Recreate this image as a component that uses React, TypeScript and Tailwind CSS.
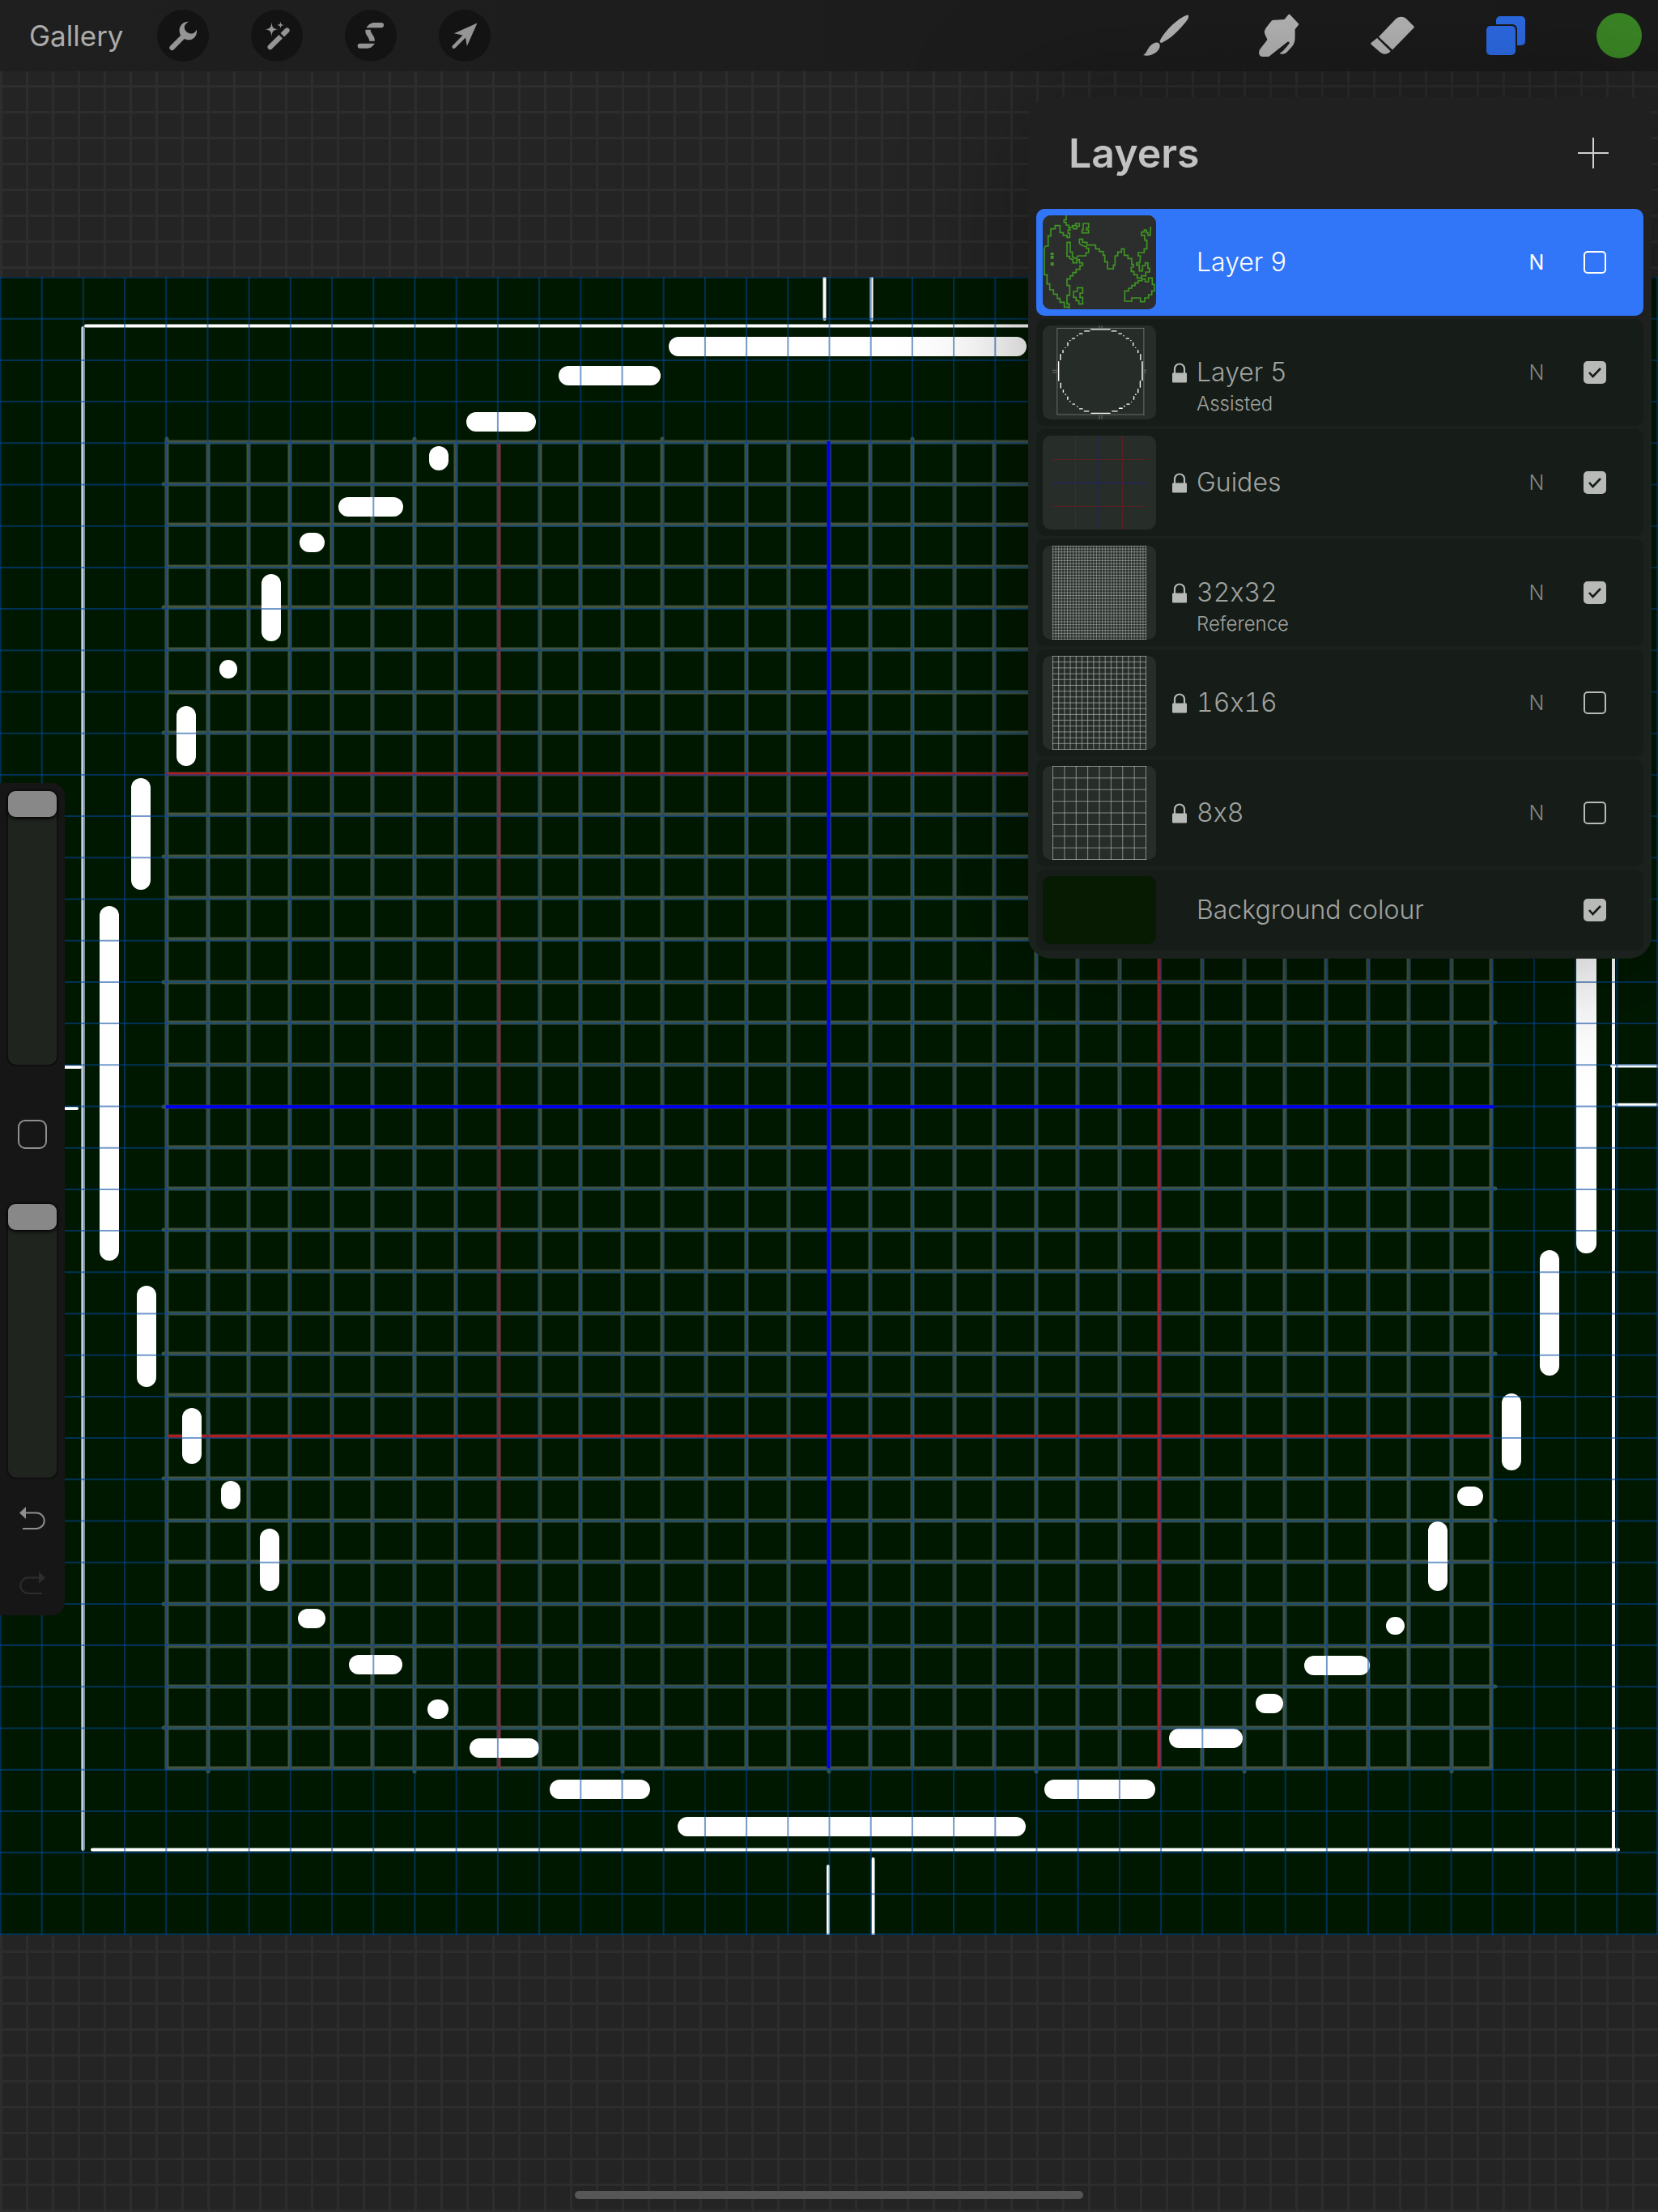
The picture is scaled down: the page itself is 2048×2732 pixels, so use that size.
import React from "react";

type Box = [number, number, number, number];

const GRID_X = [
  206, 257, 307, 358, 410, 460, 512, 563, 616, 667, 717, 769, 818, 872, 922, 974, 1024, 1075, 1127, 1179, 1228, 1280,
  1331, 1383, 1432, 1485, 1537, 1587, 1638, 1690, 1740, 1793, 1842,
];
const GRID_Y = [
  204, 256, 306, 358, 408, 460, 513, 563, 614, 664, 716, 767, 818, 871, 921, 973, 1025, 1075, 1126, 1177, 1228, 1280,
  1330, 1381, 1432, 1484, 1536, 1587, 1639, 1691, 1741, 1792, 1842,
];

// Brush strokes of the circle: left, top, right, bottom in canvas units.
const ARC_TOP_LEFT: Box[] = [
  [690, 110, 816, 134],
  [576, 167, 662, 191],
  [530, 209, 554, 239],
  [418, 272, 498, 296],
  [370, 316, 401, 340],
  [323, 367, 347, 450],
  [271, 473, 293, 496],
  [218, 530, 242, 604],
  [162, 619, 186, 757],
];
const ARC_REST: Box[] = [
  [826, 74, 1268, 98],
  [123, 777, 147, 1215],
  [169, 1246, 193, 1371],
  [225, 1397, 249, 1466],
  [273, 1487, 297, 1522],
  [321, 1546, 345, 1623],
  [368, 1645, 402, 1669],
  [431, 1702, 497, 1726],
  [528, 1757, 554, 1781],
  [580, 1805, 666, 1829],
  [679, 1856, 803, 1880],
  [837, 1902, 1267, 1926],
  [1290, 1856, 1427, 1880],
  [1444, 1793, 1535, 1817],
  [1551, 1750, 1585, 1774],
  [1611, 1703, 1692, 1727],
  [1712, 1655, 1735, 1677],
  [1764, 1537, 1788, 1623],
  [1800, 1494, 1832, 1518],
  [1855, 1379, 1879, 1474],
  [1902, 1202, 1926, 1357],
  [1947, 776, 1972, 1206],
];
const STROKES: Box[] = [
  ...ARC_TOP_LEFT,
  ...ARC_TOP_LEFT.map(([l, t, r, b]): Box => [2096 - r, t, 2096 - l, b]),
  ...ARC_REST,
];

function CircleStrokes() {
  return (
    <g fill="#fff">
      {STROKES.map(([l, t, r, b], i) => (
        <rect key={i} x={l} y={t} width={r - l} height={b - t} rx={Math.min(12, (r - l) / 2, (b - t) / 2)} />
      ))}
    </g>
  );
}

function Frame({ width }: { width: number }) {
  return (
    <g stroke="#fff" strokeWidth={width} strokeLinecap="round" fill="none">
      <path d="M106 60.500H1993M102.500 63V1942M114 1942.500H1999M1993 62V1942" />
      <path d="M1018.500 0V52M1076.500 0V53M1023 1963V2047M1078.500 1954V2047" />
      <path d="M0 976H99M0 1027H95M1991 974.500H2048M1997 1022.500H2048" />
    </g>
  );
}

function Canvas() {
  const cells = Array.from({ length: 41 }, (_, i) => i);
  return (
    <svg viewBox="0 0 2048 2048" className="block w-full bg-[#001800]" role="img" aria-label="Canvas">
      <g stroke="#43533f" strokeWidth="5" strokeLinecap="round">
        {GRID_X.map((x, i) => (
          <line key={x} x1={x} x2={x} y1={i % 6 === 0 ? 200 : 204} y2={i % 5 === 1 ? 1846 : 1842} />
        ))}
        {GRID_Y.map((y, i) => (
          <line key={y} y1={y} y2={y} x1={i % 3 === 1 ? 202 : 206} x2={i % 4 === 2 ? 1847 : 1842} />
        ))}
      </g>
      <path d="M616 204V1842M1432 204V1842M204 614H1842M208 1432H1842" stroke="#b01c1c" strokeWidth="4" fill="none" />
      <Frame width={4} />
      <CircleStrokes />
      <g stroke="#00489c" strokeOpacity="0.55">
        {cells.map((i) => {
          const at = Math.min(2047, i * 51.2 + 0.5);
          return (
            <React.Fragment key={i}>
              <line x1={at} x2={at} y1="0" y2="2048" strokeWidth="2" />
              <line y1={at} y2={at} x1="0" x2="2048" strokeWidth="2" />
            </React.Fragment>
          );
        })}
      </g>
      <path d="M1023.500 203V1842M205 1025H1846" stroke="#0000f0" strokeWidth="4" fill="none" />
    </svg>
  );
}

function WrenchIcon() {
  return (
    <svg viewBox="0 0 64 64" className="size-16" fill="#959595">
      <path d="M39.300 14.700C33 14.100 27.600 19 27.600 25.300c0 2.500.6 4.500 1.600 6.500L16.200 44.700c-2.800 3 1.400 7.400 4.500 4.600l13.100-13.200c2 .8 4 1.300 6.200 1.200 5.600-.4 10-5.800 9-12.800-2 3.800-4.300 5.400-7.200 5-4.300-.5-7.500-3.500-8-7.300-.3-3 1.800-5.600 5.500-7.500z" />
    </svg>
  );
}

function WandIcon() {
  return (
    <svg viewBox="0 0 64 64" className="size-16" fill="#959595">
      <path d="M25.500 15.500c.7 6.500 1.800 8 8.300 8.800-6.500.8-7.600 2.200-8.300 8.800-.7-6.600-1.800-8-8.300-8.800 6.500-.8 7.600-2.300 8.300-8.800z" />
      <path d="M36.500 14.500c.4 3.200.9 4 4.200 4.400-3.300.4-3.800 1.100-4.200 4.400-.4-3.300-.9-4-4.200-4.400 3.300-.4 3.800-1.200 4.200-4.400z" />
      <path d="M34.500 31l4.600 4.300-13.300 13.200c-3 2.700-7.200-1.600-4.500-4.500zM36.500 29l6-5.900c3-2.800 7.200 1.600 4.400 4.600l-5.800 5.700z" />
    </svg>
  );
}

function SelectIcon() {
  return (
    <svg viewBox="0 0 64 64" className="size-16" fill="#959595">
      <path d="M26.500 22.200C29 18.500 32 16 37 16h8a3 3 0 0 1 0 6.200zM25.500 24.800h6.200c-.2 5.300 5.500 6.500 5.200 14h-6.700c.3-5.500-6-7-4.700-14zM36.800 41.800c-2.500 3.900-5.300 6-10.300 6h-7.800a3 3 0 0 1 0-6z" />
    </svg>
  );
}

function ArrowIcon() {
  return (
    <svg viewBox="0 0 64 64" className="size-16" fill="#959595">
      <path d="M47.500 16.500L34.800 45l-1.700-10.500L20.300 47.300c-2.600 2-5-.5-3.200-3L29.500 31.500l-10.700-2.200z" />
    </svg>
  );
}

function BrushIcon() {
  return (
    <svg viewBox="0 0 56 56" className="size-14" fill="#b2b2b2">
      <path d="M56.300 3c1 1-.8 4.300-3.300 7.800C45 21 33.500 32.500 22.300 37.200l-2-2C25 24.500 38.500 11 49 5c3.500-2 6.500-3 7.300-2z" />
      <path d="M19.800 37.500c2.200 3.500.3 8.200-4.300 11.500C11 52.500 4.500 53.500 0 52c4-2 4.500-5.500 7-9 3.500-5 9.500-8 12.800-5.500z" />
    </svg>
  );
}

function SmudgeIcon() {
  return (
    <svg viewBox="0 0 56 56" className="size-14" fill="#b2b2b2">
      <path d="M39.500 2c.7-.5 1.300-.5 1.900 0l10.400 11c.6.7.6 1.300 0 2l-4.200 5.200v10c0 4.500-1 8-3.500 11-3 3.500-6 7-8.500 8.800-2 1-5.600 1.100-7-.2 3.500-1 9.900-9.500 12-12 .8-1.500-.9-3.200-2.300-2L16.500 53c-.8.8-1.600 1-2.600 1H7.500c-4-.5-5-3.500-4-7.500.3-1.700 9.800-12.500 9.800-13.500 0-1.500-3.300-6.500-3.400-9-.2-3 1.700-5 3-7 2-2.500 3.500-5 5-6.300C19.100 8.800 20.500 8.800 22.500 8.800l12-.8z" />
    </svg>
  );
}

function EraserIcon() {
  return (
    <svg viewBox="0 0 56 56" className="size-14" fill="#b2b2b2">
      <path d="M11 29.500L31.500 8C36 3.800 41.500 3.800 46 8L54.500 16.500c.6.6.6 1.200 0 1.800L28 45.500z" />
      <path d="M9 31L25.700 47.300c-4.200 4.700-9.200 4.500-13.500.7L1.500 38.700c-.5-.6-.5-1.200 0-1.700z" />
    </svg>
  );
}

function LayersIcon() {
  return (
    <svg viewBox="0 0 56 56" className="size-14" fill="#2c69e2">
      <path d="M16 14V9a5 5 0 0 1 5-5h26a5 5 0 0 1 5 5v26a5 5 0 0 1-5 5h-5V20a6 6 0 0 0-6-6z" />
      <rect x="4" y="16" width="36" height="36" rx="5" />
    </svg>
  );
}

function LockIcon() {
  return (
    <svg viewBox="0 0 18 25" className="h-[25px] w-[18px]" aria-label="Locked" role="img">
      <path d="M3 13V7.500a6 6 0 0 1 12 0V13" fill="none" stroke="#b8bab8" strokeWidth="2.200" />
      <rect y="12.500" width="18" height="12" rx="1" fill="#b8bab8" />
    </svg>
  );
}

const COAST =
  "M111 30V46H103V56H111V66H120V74H134V68H146V60H160V70H150V80H138V74M120 74L126 84H118V96H124V112H114V104H100V94H88V68H70V80H54V106H44V144H34L30 152V250H40V284H50V306H64V322H78V338H88V352H104V370H122V376V358H114V326H124V290H114V266H126V254H136V242H148V230H162V216H172V206H160V194H150V206H136V194L124 190V182H114V130H126V166H134V184L148 190L154 180H184V168H194V152H186V146L170 142L160 134V118H172V130H188V140H220V154H234V164H248V178H254V202H264V228H286V214H292V180H302V166H316V154H326V178H340V190H354V212H360V222H352V238H362V250H374V262H390V254H406V240H420V226H414V206H404V216H394V236H382V214H372V206H384L386 180H378V168H400V154H410V122H402V104H390V92H400V84H408V94H414V104H422L424 72M174 60H194V76H186V84H194V95H170V84H174ZM152 298H172V318H162V334H172V358H158V346H148V334H138V312H152ZM328 310H342V300H354V290H366V280H378V272H392V266H404V276H416V262H430V286H438V310H428V324H416V336H402V350H386V336H354V348H328Z";

function GridLines({ cells, opacity }: { cells: number; opacity: number }) {
  const step = 115 / cells;
  const marks = Array.from({ length: cells + 1 }, (_, i) => i * step + 0.5);
  const d = marks.map((m) => `M${12 + m} 0V116M12 ${m}H128`).join("");
  return <path d={d} stroke="#c3c9c3" strokeOpacity={opacity} strokeWidth="1" fill="none" />;
}

function Thumbnail({ kind }: { kind: string }) {
  return (
    <svg viewBox="0 0 140 116" className="h-[116px] w-[140px] shrink-0 rounded-[10px] bg-[#272d29]" aria-hidden="true">
      {kind === "map" && (
        <svg viewBox="24 30 420 348" width="140" height="116">
          <rect x="24" y="30" width="420" height="348" fill="#2c2e2e" />
          <path d={COAST} fill="none" stroke="#3f9523" strokeWidth="5" />
          <path d="M53 168h12v10H53zM53 180h12v11H53zM53 204h12v12H53z" fill="#3f9523" />
        </svg>
      )}
      {kind === "circle" && (
        <svg viewBox="0 0 2048 2048" x="12" width="116" height="116">
          <g opacity="0.35">
            <Frame width={16} />
          </g>
          <CircleStrokes />
        </svg>
      )}
      {kind === "guides" && (
        <g fill="none">
          <path d="M40.500 0V116M98.500 0V116M12 29.500H128M12 87.500H128" stroke="#5a2022" />
          <path d="M69.500 0V116M12 58.500H128" stroke="#1d1f74" />
        </g>
      )}
      {kind === "32" && <GridLines cells={32} opacity={0.5} />}
      {kind === "16" && <GridLines cells={16} opacity={0.6} />}
      {kind === "8" && <GridLines cells={8} opacity={0.6} />}
    </svg>
  );
}

type Layer = { name: string; kind: string; note?: string; locked?: boolean; visible?: boolean; selected?: boolean };

const LAYERS: Layer[] = [
  { name: "Layer 9", kind: "map", selected: true },
  { name: "Layer 5", kind: "circle", note: "Assisted", locked: true, visible: true },
  { name: "Guides", kind: "guides", locked: true, visible: true },
  { name: "32x32", kind: "32", note: "Reference", locked: true, visible: true },
  { name: "16x16", kind: "16", locked: true },
  { name: "8x8", kind: "8", locked: true },
];

function VisibilityBox({ name, checked, selected }: { name: string; checked?: boolean; selected?: boolean }) {
  return (
    <label className="grid size-7 shrink-0 cursor-pointer">
      <input
        type="checkbox"
        defaultChecked={checked}
        aria-label={`${name} visible`}
        className={
          selected
            ? "peer col-start-1 row-start-1 size-7 appearance-none rounded-[5px] border-2 border-white checked:bg-white"
            : "peer col-start-1 row-start-1 size-7 appearance-none rounded-[5px] border-2 border-[#b8bab8] checked:bg-[#b8bab8]"
        }
      />
      <svg
        viewBox="0 0 28 28"
        className="pointer-events-none invisible col-start-1 row-start-1 size-7 peer-checked:visible"
        fill="none"
        stroke="#161c17"
        strokeWidth="2.600"
      >
        <path d="M7 14l4.500 5L21 9" />
      </svg>
    </label>
  );
}

function LayerRow({ layer }: { layer: Layer }) {
  const { name, kind, note, locked, visible, selected } = layer;
  return (
    <li
      className={
        selected
          ? "flex h-[132px] items-center rounded-[10px] bg-[#3175f8] pr-[46px] pl-2 text-white"
          : "flex h-[132px] items-center rounded-[10px] bg-[#161c17] pr-[46px] pl-2 text-[#a0a3a0]"
      }
    >
      <Thumbnail kind={kind} />
      <span className="ml-5 flex w-[30px] shrink-0">{locked && <LockIcon />}</span>
      <div className="grid h-full flex-1 grid-rows-[1fr_auto_1fr]">
        <button type="button" className="row-start-2 text-left text-[32px] leading-[42px] font-light">
          {name}
        </button>
        {note && <span className="row-start-3 text-2xl leading-9 font-light">{note}</span>}
      </div>
      <button
        type="button"
        aria-label={`${name} blend mode`}
        className={selected ? "w-10 text-[25px] leading-8" : "w-10 text-[25px] leading-8 font-light text-[#858885]"}
      >
        N
      </button>
      <span className="w-[38px]" />
      <VisibilityBox name={name} checked={visible} selected={selected} />
    </li>
  );
}

function LayersPanel() {
  return (
    <section
      aria-label="Layers"
      className="mt-8 mr-2 w-[770px] rounded-[28px] bg-linear-to-b from-[#202020] from-20% to-[#1b211d] to-35% px-2.5 pb-2.5 shadow-[0_0_150px_rgba(0,0,0,0.35)]"
    >
      <div className="flex h-[138px] items-center justify-between pr-[43px] pl-10">
        <h1 className="text-[50px] leading-[56px] font-semibold text-[#c2c2c2]">Layers</h1>
        <button type="button" aria-label="Add layer">
          <svg viewBox="0 0 38 38" className="size-[38px]" stroke="#d0d0d0" strokeWidth="2">
            <path d="M19 0V38M0 19H38" />
          </svg>
        </button>
      </div>
      <ul className="flex flex-col gap-1">
        {LAYERS.map((layer) => (
          <LayerRow key={layer.name} layer={layer} />
        ))}
        <li className="flex h-[100px] items-center rounded-[10px] bg-[#161c18] pr-[46px] pl-2 text-[#a0a3a0]">
          <span className="h-[84px] w-[140px] rounded-[10px] bg-[#071a02]" />
          <button type="button" className="ml-[50px] flex-1 text-left text-[32px] leading-[42px] font-light">
            Background colour
          </button>
          <VisibilityBox name="Background colour" checked />
        </li>
      </ul>
    </section>
  );
}

function VerticalSlider({ label }: { label: string }) {
  return (
    <input
      type="range"
      aria-label={label}
      defaultValue={100}
      className="h-[338px] w-[60px] appearance-none rounded-[10px] bg-[#20241f] shadow-[0_0_0_2px_#0e0f0e] [direction:rtl] [writing-mode:vertical-lr] [&::-webkit-slider-thumb]:h-8 [&::-webkit-slider-thumb]:w-[60px] [&::-webkit-slider-thumb]:appearance-none [&::-webkit-slider-thumb]:rounded-[9px] [&::-webkit-slider-thumb]:bg-[#888888] [&::-webkit-slider-thumb]:shadow-[0_2px_5px_#000000]"
    />
  );
}

function Sidebar() {
  return (
    <aside className="mt-[879px] flex h-[1028px] w-20 flex-col items-center rounded-r-2xl bg-[#151615] pt-2.5">
      <VerticalSlider label="Brush size" />
      <button type="button" aria-label="Modify" className="my-17 size-9 rounded-[9px] border-2 border-[#8f8f8f]" />
      <VerticalSlider label="Brush opacity" />
      <button type="button" aria-label="Undo" className="mt-9">
        <svg viewBox="0 0 32 28" className="h-7 w-8">
          <path d="M0 7.500L8 0V15Z" fill="#8f8f8f" />
          <path d="M7 7.500H21a9.700 9.700 0 0 1 0 19.400H4" fill="none" stroke="#8f8f8f" strokeWidth="2" />
        </svg>
      </button>
      <button type="button" aria-label="Redo" className="mt-[52px]">
        <svg viewBox="0 0 32 28" className="h-7 w-8">
          <path d="M32 7.500L24 0V15Z" fill="#2d2d2d" />
          <path d="M25 7.500H11a9.700 9.700 0 0 0 0 19.400H28" fill="none" stroke="#2d2d2d" strokeWidth="2" />
        </svg>
      </button>
    </aside>
  );
}

function TopBar() {
  const round = "size-16 rounded-full bg-[#131313]";
  return (
    <header className="flex h-[88px] items-center justify-between bg-linear-to-r from-[#1f1f1f] to-[#1a1a1a] pr-5 pl-9">
      <div className="flex items-center">
        <button type="button" className="w-[158px] text-left text-[35px] leading-10 text-[#ababab]">
          Gallery
        </button>
        <div className="flex gap-[52px]">
          <button type="button" aria-label="Actions" className={round}>
            <WrenchIcon />
          </button>
          <button type="button" aria-label="Adjustments" className={round}>
            <WandIcon />
          </button>
          <button type="button" aria-label="Selection" className={round}>
            <SelectIcon />
          </button>
          <button type="button" aria-label="Transform" className={round}>
            <ArrowIcon />
          </button>
        </div>
      </div>
      <div className="flex gap-[84px]">
        <button type="button" aria-label="Paint">
          <BrushIcon />
        </button>
        <button type="button" aria-label="Smudge">
          <SmudgeIcon />
        </button>
        <button type="button" aria-label="Erase">
          <EraserIcon />
        </button>
        <button type="button" aria-label="Layers">
          <LayersIcon />
        </button>
        <button type="button" aria-label="Colour" className="size-14 rounded-full bg-[#3a8424]" />
      </div>
    </header>
  );
}

export default function App() {
  return (
    <div className="grid min-h-screen grid-cols-[minmax(0,1fr)] overflow-hidden font-['Inter',sans-serif] [font-feature-settings:'calt'_0,'tnum'_1]">
      <div className="col-start-1 row-start-1 flex items-center bg-[#242424] bg-[linear-gradient(#2d2d2d_3px,transparent_3px),linear-gradient(90deg,#2d2d2d_3px,transparent_3px)] bg-size-[32px_32px] bg-position-[0_9px]">
        <Canvas />
      </div>
      <div className="z-10 col-start-1 row-start-1 flex flex-col">
        <TopBar />
        <main className="flex flex-1 items-start justify-between">
          <Sidebar />
          <LayersPanel />
        </main>
        <footer className="flex justify-center pb-4">
          <div className="h-2.5 w-[628px] rounded-full bg-[#565656]" />
        </footer>
      </div>
    </div>
  );
}
